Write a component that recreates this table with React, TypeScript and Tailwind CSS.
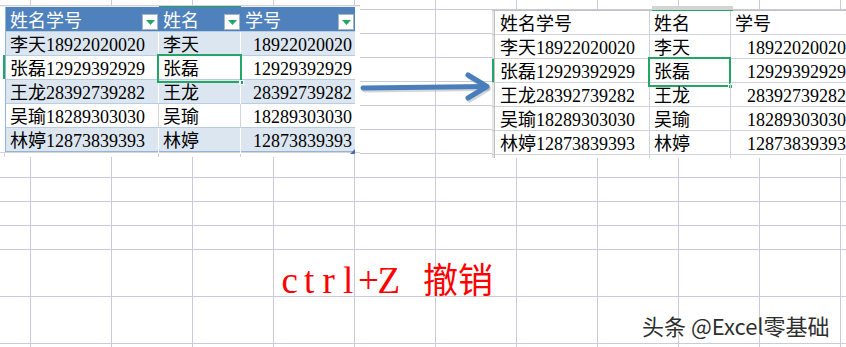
import React from "react";

const rows: [string, string][] = [
  ["李天", "18922020020"],
  ["张磊", "12929392929"],
  ["王龙", "28392739282"],
  ["吴瑜", "18289303030"],
  ["林婷", "12873839393"],
];

const BODY_FONT = { fontFamily: '"Liberation Serif", "Noto Sans CJK SC", serif' };
const HEAD_FONT = { fontFamily: '"Noto Sans CJK SC", "Liberation Sans", sans-serif' };

function FilterBtn() {
  return (
    <div className="absolute right-[1px] bottom-[1px] w-[16px] h-[16px] bg-white border border-[#a9b4c4] flex items-center justify-center">
      <svg width="9" height="5" viewBox="0 0 9 5">
        <path d="M0 0 L9 0 L4.5 5 Z" fill="#22a565" />
      </svg>
    </div>
  );
}

function BackgroundGrid() {
  const cells: React.ReactNode[] = [];
  const nCols = 12;
  const nRows = 14;
  for (let r = 0; r < nRows; r++) {
    for (let c = 0; c < nCols; c++) {
      const lastC = c === nCols - 1;
      const lastR = r === nRows - 1;
      let cls = "border-[#c9cbdc] ";
      if (!lastC && !lastR) cls += "border-r border-b";
      else if (!lastC) cls += "border-r";
      else if (!lastR) cls += "border-b";
      cells.push(<div key={`${r}-${c}`} className={cls} />);
    }
  }
  return (
    <div className="absolute inset-0 grid grid-cols-[31px_repeat(10,81px)_1fr] grid-rows-[10px_repeat(10,24px)_47px_47px_1fr]">
      {cells}
    </div>
  );
}

function LeftWindow() {
  return (
    <div className="absolute left-0 top-[5px] w-[360px] h-[152px] bg-white">
      <div className="flex h-[2px] flex-col">
        <div className="h-[1px] bg-[#d0d0d0]" />
        <div className="flex h-[1px]">
          <div className="w-[159px] bg-[#eeeeee]" />
          <div className="w-[82px] bg-[#22a565]" />
          <div className="flex-1 bg-[#eeeeee]" />
        </div>
      </div>
      <div className="flex">
        <div className="w-[5px] flex flex-col">
          {[0, 1, 2, 3, 4, 5].map((i) => (
            <div key={i} className="h-[24px] flex justify-end">
              {i === 2 ? <div className="w-[2px] bg-[#22a565]" /> : null}
            </div>
          ))}
        </div>
        <div className="w-[350px] flex flex-col border-l border-b border-[#95b3d7]" >
          <div className="grid grid-cols-[153px_82px_114px] h-[24px] bg-[#4f81bd] text-white text-[18px]" style={HEAD_FONT}>
            <div className="relative pl-[4px] leading-[24px]">姓名学号<FilterBtn /></div>
            <div className="relative pl-[4px] leading-[24px]">姓名<FilterBtn /></div>
            <div className="relative pl-[4px] leading-[24px]">学号<FilterBtn /></div>
          </div>
          {rows.map(([n, num], i) => {
            const band = i % 2 === 0;
            return (
              <div
                key={i}
                className={
                  band
                    ? "grid grid-cols-[153px_82px_114px] h-[24px] bg-[#dce6f1] text-[18px] text-black border-t border-[#b8cce4]"
                    : "grid grid-cols-[153px_82px_114px] h-[24px] bg-white text-[18px] text-black border-t border-[#b8cce4]"
                }
                style={BODY_FONT}
              >
                <div className={band ? "pl-[4px] leading-[26px] border-r border-white whitespace-nowrap" : "pl-[4px] leading-[26px] border-r border-[#d4d4d4] whitespace-nowrap"}>
                  {n}
                  {num}
                </div>
                <div className={band ? "relative pl-[4px] leading-[26px] border-r border-white" : "relative pl-[4px] leading-[26px] border-r border-[#d4d4d4]"}>
                  {n}
                  {i === 1 ? (
                    <div className="absolute left-[-2px] top-[-2px] right-[-2px] bottom-[-1px] border-2 border-[#22a565]">
                      <div className="absolute right-[-4px] bottom-[-4px] w-[5px] h-[5px] bg-[#22a565] border border-white" />
                    </div>
                  ) : null}
                </div>
                <div className="relative text-right pr-[3px] leading-[26px]">
                  {num}
                  {i === 4 ? (
                    <svg className="absolute right-0 bottom-0" width="5" height="5" viewBox="0 0 5 5">
                      <path d="M5 0 L5 5 L0 5 Z" fill="#4a6cb8" />
                    </svg>
                  ) : null}
                </div>
              </div>
            );
          })}
        </div>
      </div>
      <div className="flex h-[5px] border-t border-[#d4d4d4] mt-[0px]">
        <div className="w-[5px] border-r border-[#d4d4d4]" />
        <div className="w-[154px] border-r border-[#d4d4d4]" />
        <div className="w-[82px] border-r border-[#d4d4d4]" />
        <div className="w-[114px] border-r border-[#d4d4d4]" />
      </div>
    </div>
  );
}

function RightWindow() {
  const all: [string, string, string, boolean][] = [
    ["姓名学号", "姓名", "学号", false],
    ...rows.map(([n, num]) => [n + num, n, num, true] as [string, string, string, boolean]),
  ];
  return (
    <div className="absolute left-[492px] top-[6px] w-[354px] h-[152px] overflow-hidden">
      <div className="flex h-[5px]">
        <div className="w-[160px] border-b border-[#c0c0c0]" />
        <div className="w-[81px] bg-[#d4d4d4] border-b border-[#22a565]" />
        <div className="flex-1 border-b border-[#c0c0c0]" />
      </div>
      <div className="flex bg-white h-[147px]" style={BODY_FONT}>
        <div className="w-[5px] flex flex-col bg-[#e6e6e6] border-r border-[#c0c0c0]">
          {all.map((_, i) => (
            <div key={i} className="h-[24px] flex justify-end border-b border-[#c8c8c8]">
              {i === 2 ? <div className="w-[2px] bg-[#22a565]" /> : null}
            </div>
          ))}
        </div>
        <div className="flex flex-col">
          {all.map(([a, b, c, isNum], i) => (
            <div key={i} className="grid grid-cols-[155px_81px_118px] h-[24px] text-[18px] text-black border-b border-[#d0d2dc]">
              <div className="pl-[5px] leading-[26px] border-r border-[#d0d2dc] whitespace-nowrap">{a}</div>
              <div className="relative pl-[4px] leading-[26px] border-r border-[#d0d2dc]">
                {b}
                {i === 2 ? (
                  <div className="absolute left-[-2px] top-[-2px] right-[-1px] bottom-[-2px] border-2 border-[#22a565]">
                    <div className="absolute right-[-4px] bottom-[-4px] w-[5px] h-[5px] bg-[#22a565] border border-white" />
                  </div>
                ) : null}
              </div>
              <div className={isNum ? "text-right pr-[3px] leading-[26px] whitespace-nowrap" : "pl-[4px] leading-[26px] whitespace-nowrap"}>{c}</div>
            </div>
          ))}
          <div className="grid grid-cols-[155px_81px_118px] h-[3px]">
            <div className="border-r border-[#d0d2dc]" />
            <div className="border-r border-[#d0d2dc]" />
            <div />
          </div>
        </div>
      </div>
    </div>
  );
}

function Arrow() {
  return (
    <svg className="absolute left-[355px] top-[68px]" width="145" height="40" viewBox="0 0 145 40">
      <g stroke="#9aa3b0" strokeOpacity="0.45" strokeWidth="5" strokeLinecap="round" fill="none" transform="translate(1.5,2)">
        <path d="M8 20 L131 18.5" />
        <path d="M113 7 L132 18.5 L113 30" strokeLinejoin="round" />
      </g>
      <g stroke="#4a7ebb" strokeWidth="5" strokeLinecap="round" fill="none">
        <path d="M8 20 L131 18.5" />
        <path d="M113 7 L132 18.5 L113 30" strokeLinejoin="round" />
      </g>
    </svg>
  );
}

export default function App() {
  const ctrl = ["c", "t", "r", "l", "+", "Z"];
  return (
    <div className="relative w-[846px] h-[347px] bg-white overflow-hidden">
      <BackgroundGrid />
      <LeftWindow />
      <RightWindow />
      <Arrow />
      <div className="absolute left-[280px] top-[252px] flex items-baseline text-[#ff0000] whitespace-nowrap">
        <span className="flex text-[37px]" style={{ fontFamily: '"Liberation Serif", serif' }}>
          {ctrl.map((ch, i) => (
            <span key={i} className="inline-block w-[19.5px] text-center">{ch}</span>
          ))}
        </span>
        <span className="text-[35px] ml-[26px]" style={{ fontFamily: '"Noto Sans CJK SC", sans-serif' }}>撤销</span>
      </div>
      <div
        className="absolute left-[642px] top-[309px] text-[22px] text-[#2e2e2e] whitespace-nowrap"
        style={{ fontFamily: '"Noto Sans CJK SC", "Liberation Sans", sans-serif', textShadow: "0 0 2px #fff, 0 0 2px #fff" }}
      >
        头条 @Excel零基础
      </div>
    </div>
  );
}
